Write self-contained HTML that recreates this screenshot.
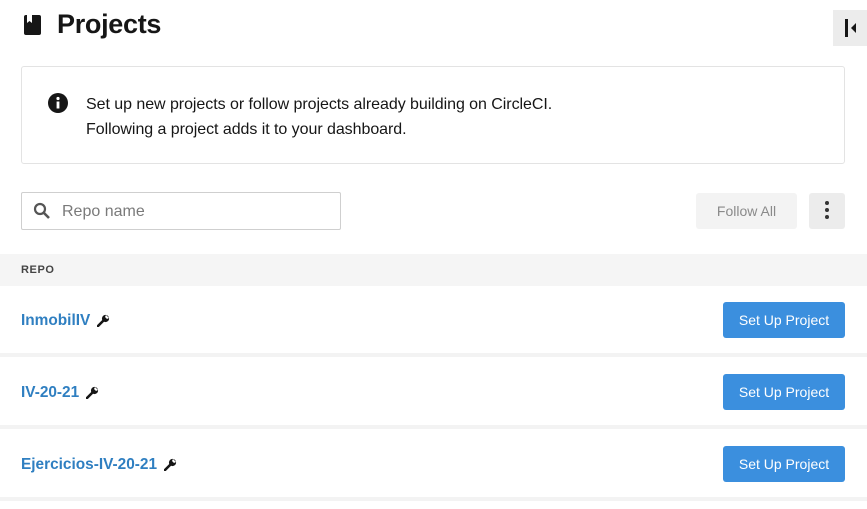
<!DOCTYPE html>
<html><head><style>
body{margin:0;width:867px;height:509px;overflow:hidden;background:#fff;font-family:"Liberation Sans",sans-serif;position:relative;color:#161616}
.a{position:absolute}
.btn{position:absolute;left:723px;width:122px;height:36px;background:#3b8fde;border-radius:3px;color:#fff;font-size:14px;line-height:36px;text-align:center}
.name{position:absolute;left:21px;color:#2f7fc1;font-size:15.4px;font-weight:bold}
.sep{position:absolute;left:0;width:867px;height:4px;background:#f3f3f3}
.w{display:inline-block;vertical-align:middle;margin-left:7px}
</style></head><body>
<svg class="a" style="left:24px;top:15px" width="18" height="20" viewBox="0 0 18 20"><rect x="0" y="0" width="17" height="20" rx="2" fill="#161616"/><path d="M3 0h5v8l-2.5-2-2.5 2z" fill="#fff"/></svg>
<div class="a" style="left:57px;top:9px;font-size:27px;font-weight:bold;letter-spacing:-0.3px">Projects</div>
<div class="a" style="left:833px;top:10px;width:34px;height:36px;background:#ececec"></div>
<div class="a" style="left:845px;top:19px;width:3px;height:18px;background:#161616"></div>
<svg class="a" style="left:851px;top:23px" width="6" height="10"><path d="M5 0v10L0 5z" fill="#161616"/></svg>
<div class="a" style="left:21px;top:66px;width:822px;height:96px;border:1px solid #e3e3e3;border-radius:3px"></div>
<svg class="a" style="left:48px;top:93px" width="20" height="20"><circle cx="10" cy="10" r="10" fill="#161616"/><rect x="8.6" y="8.5" width="2.8" height="7" fill="#fff"/><circle cx="10" cy="5.5" r="1.6" fill="#fff"/></svg>
<div class="a" style="left:86px;top:92px;font-size:16px;line-height:25px;letter-spacing:-0.05px">Set up new projects or follow projects already building on CircleCI.<br>Following a project adds it to your dashboard.</div>
<div class="a" style="left:21px;top:192px;width:318px;height:36px;border:1px solid #cfcfcf;border-radius:2px"></div>
<svg class="a" style="left:33px;top:202px" width="18" height="18"><circle cx="7" cy="7" r="5" stroke="#555" stroke-width="2.2" fill="none"/><path d="M10.5 10.5l5.5 5.5" stroke="#555" stroke-width="2.6"/></svg>
<div class="a" style="left:62px;top:203px;font-size:16px;color:#7a7a7a">Repo name</div>
<div class="a" style="left:696px;top:193px;width:101px;height:36px;background:#f3f3f3;border-radius:3px;color:#8a8a8a;font-size:14px;line-height:36px;text-align:center">Follow All</div>
<div class="a" style="left:809px;top:193px;width:36px;height:36px;background:#ececec;border-radius:3px"></div>
<div class="a" style="left:825px;top:201px;width:4px;height:4px;border-radius:2px;background:#333;box-shadow:0 7px 0 #333,0 14px 0 #333"></div>
<div class="a" style="left:0;top:254px;width:867px;height:32px;background:#f5f5f5"></div>
<div class="a" style="left:21px;top:264px;font-size:11px;font-weight:bold;color:#444;letter-spacing:0.6px">REPO</div>
<div class="name" style="top:312px">InmobilIV<svg class="w" width="13" height="13" viewBox="0 0 13 13"><path d="M1 12l6-6" stroke="#161616" stroke-width="2.6" stroke-linecap="round"/><circle cx="8.5" cy="4.5" r="3.6" fill="#161616"/><path d="M9 1l3 3-2 1-2-2z" fill="#fff"/></svg></div>
<div class="btn" style="top:302px">Set Up Project</div>
<div class="sep" style="top:353px"></div>
<div class="name" style="top:384px">IV-20-21<svg class="w" width="13" height="13" viewBox="0 0 13 13"><path d="M1 12l6-6" stroke="#161616" stroke-width="2.6" stroke-linecap="round"/><circle cx="8.5" cy="4.5" r="3.6" fill="#161616"/><path d="M9 1l3 3-2 1-2-2z" fill="#fff"/></svg></div>
<div class="btn" style="top:374px">Set Up Project</div>
<div class="sep" style="top:425px"></div>
<div class="name" style="top:456px">Ejercicios-IV-20-21<svg class="w" width="13" height="13" viewBox="0 0 13 13"><path d="M1 12l6-6" stroke="#161616" stroke-width="2.6" stroke-linecap="round"/><circle cx="8.5" cy="4.5" r="3.6" fill="#161616"/><path d="M9 1l3 3-2 1-2-2z" fill="#fff"/></svg></div>
<div class="btn" style="top:446px">Set Up Project</div>
<div class="sep" style="top:497px"></div>
</body></html>
